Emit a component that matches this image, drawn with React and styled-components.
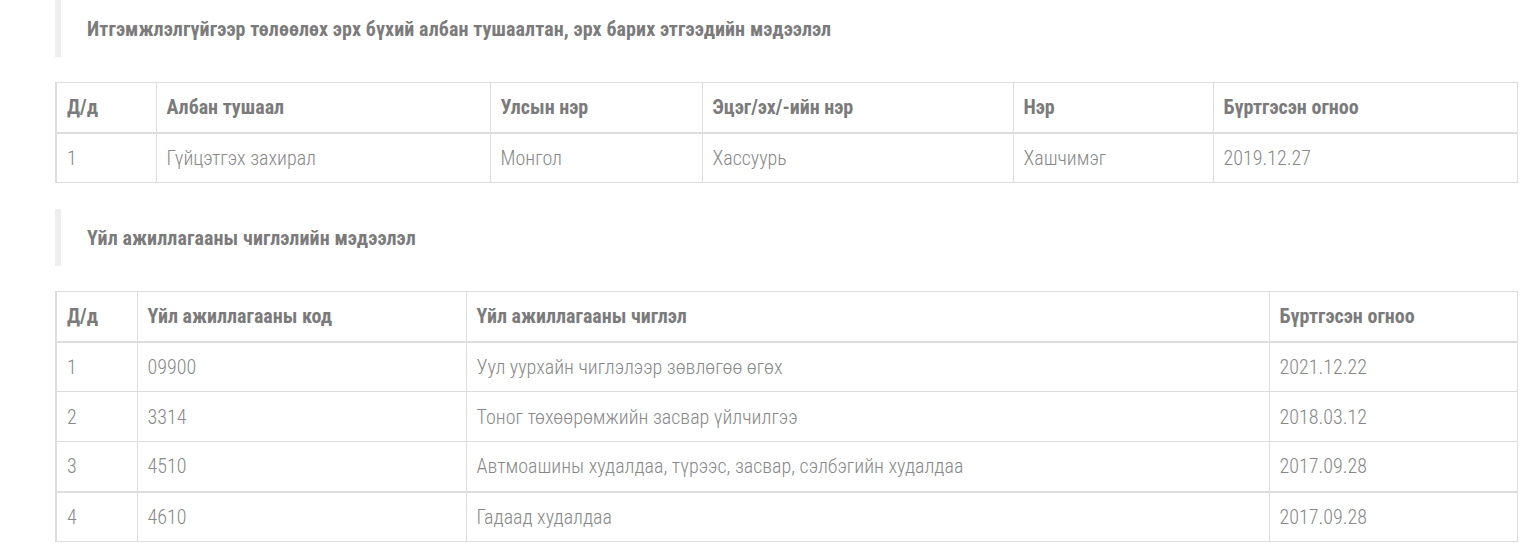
import React from "react";
import styled, { createGlobalStyle } from "styled-components";

const Global = createGlobalStyle`
  html, body { margin: 0; padding: 0; background: #fff; }
  body { font-family: "Roboto Condensed", Roboto, "Liberation Sans", sans-serif; font-stretch: 75%; }
`;

const Page = styled.div`
  padding: 0 13px 0 55px;
  display: flex;
  flex-direction: column;
`;

const Heading = styled.div`
  height: 57px;
  box-sizing: border-box;
  border-left: 6px solid #eeeeee;
  padding-left: 26px;
  display: flex;
  align-items: center;
  font-size: 20px;
  letter-spacing: 0.1px;
  font-weight: 700;
  color: #7b7b7b;
  margin-top: ${(p) => p.$top || 0}px;
`;

const Table = styled.table`
  width: 100%;
  border-collapse: collapse;
  margin-top: 25px;
  border: 1px solid #dddddd;
  border-left-width: 2px;
  font-size: 20px;
`;

const Th = styled.th`
  text-align: left;
  font-weight: 700;
  color: #7b7b7b;
  height: 50px;
  box-sizing: border-box;
  padding: 0 10px;
  border: 1px solid #dddddd;
  border-bottom-width: 2px;
  width: ${(p) => p.$w || "auto"};
`;

const Td = styled.td`
  font-weight: 300;
  color: #888888;
  height: 50px;
  box-sizing: border-box;
  padding: 0 10px;
  border: 1px solid #dddddd;
  border-top-width: ${(p) => (p.$thick ? 2 : 1)}px;
`;

const t1cols = [
  ["Д/д", "100px"],
  ["Албан тушаал", "334px"],
  ["Улсын нэр", "212px"],
  ["Эцэг/эх/-ийн нэр", "311px"],
  ["Нэр", "200px"],
  ["Бүртгэсэн огноо", "auto"],
];
const t1rows = [["1", "Гүйцэтгэх захирал", "Монгол", "Хассуурь", "Хашчимэг", "2019.12.27"]];

const t2cols = [
  ["Д/д", "81px"],
  ["Үйл ажиллагааны код", "329px"],
  ["Үйл ажиллагааны чиглэл", "803px"],
  ["Бүртгэсэн огноо", "auto"],
];
const t2rows = [
  ["1", "09900", "Уул уурхайн чиглэлээр зөвлөгөө өгөх", "2021.12.22"],
  ["2", "3314", "Тоног төхөөрөмжийн засвар үйлчилгээ", "2018.03.12"],
  ["3", "4510", "Автмоашины худалдаа, түрээс, засвар, сэлбэгийн худалдаа", "2017.09.28"],
  ["4", "4610", "Гадаад худалдаа", "2017.09.28"],
];

function DataTable({ cols, rows, thickRow }) {
  return (
    <Table>
      <thead>
        <tr>
          {cols.map(([c, w]) => (
            <Th key={c} $w={w}>{c}</Th>
          ))}
        </tr>
      </thead>
      <tbody>
        {rows.map((r, i) => (
          <tr key={i}>
            {r.map((v, j) => (
              <Td key={j} $thick={i === thickRow}>{v}</Td>
            ))}
          </tr>
        ))}
      </tbody>
    </Table>
  );
}

export default function App() {
  return (
    <Page>
      <Global />
      <Heading>Итгэмжлэлгүйгээр төлөөлөх эрх бүхий албан тушаалтан, эрх барих этгээдийн мэдээлэл</Heading>
      <DataTable cols={t1cols} rows={t1rows} />
      <Heading $top={26}>Үйл ажиллагааны чиглэлийн мэдээлэл</Heading>
      <DataTable cols={t2cols} rows={t2rows} thickRow={3} />
    </Page>
  );
}
